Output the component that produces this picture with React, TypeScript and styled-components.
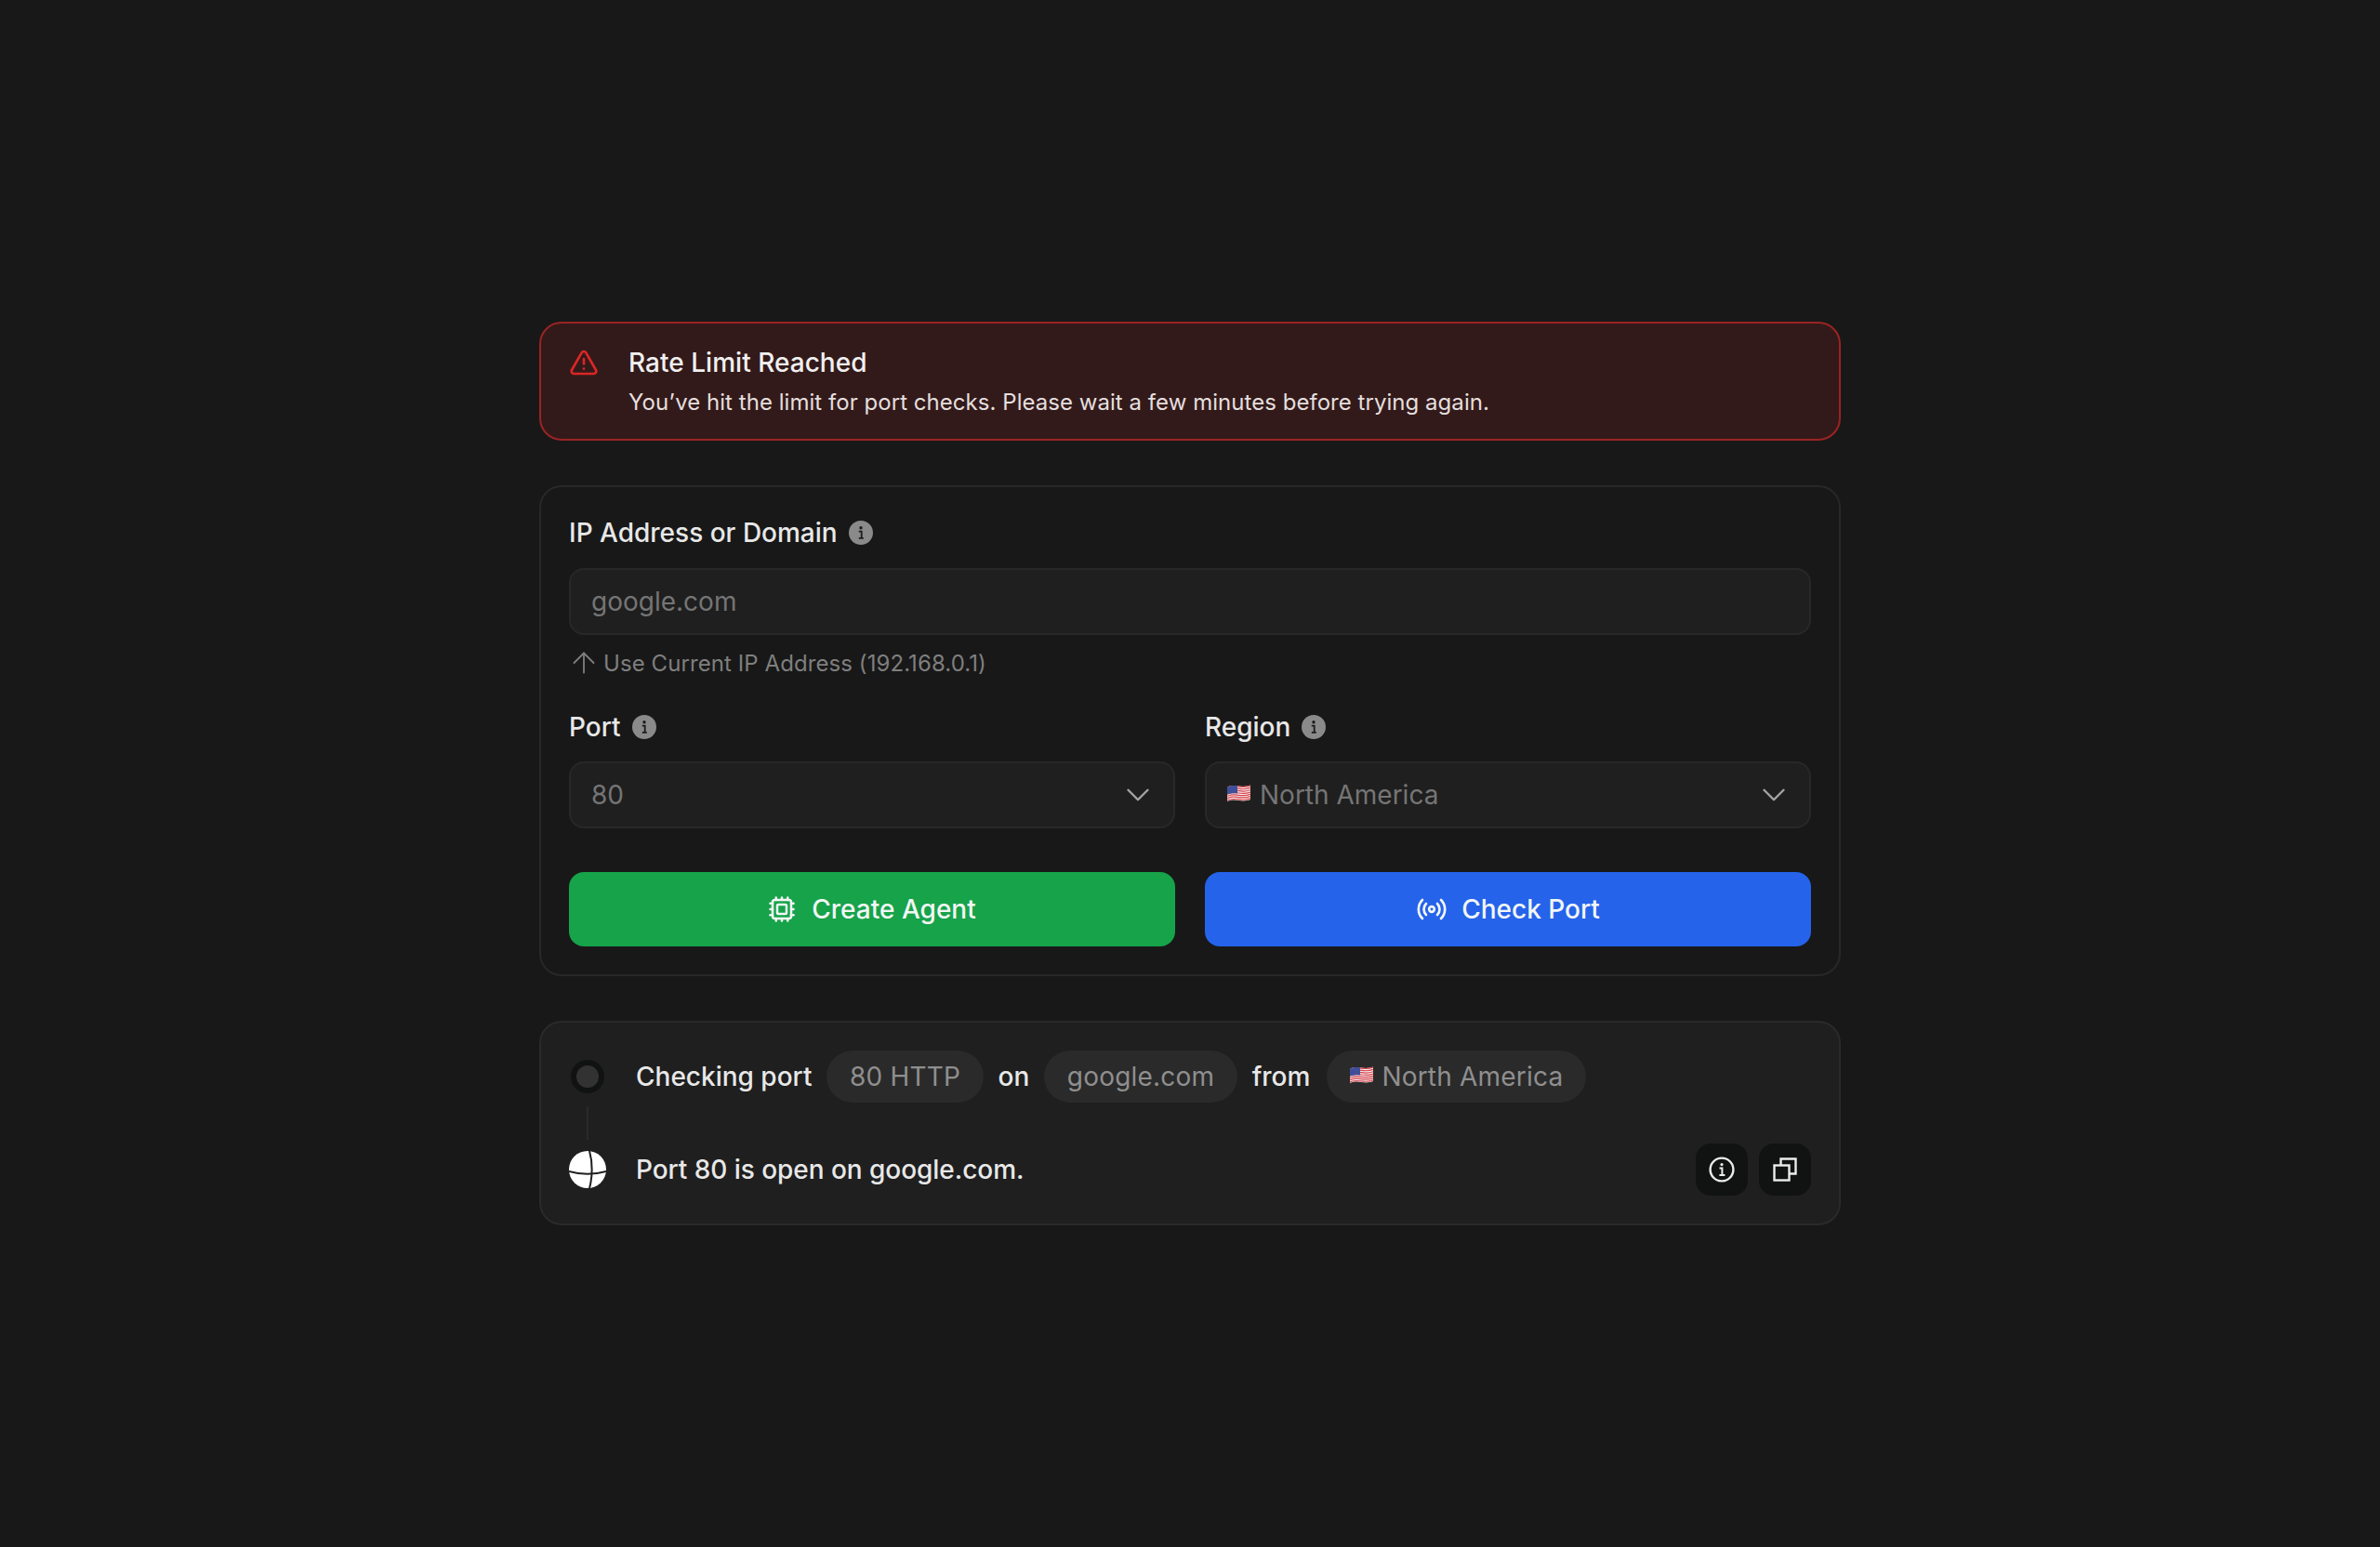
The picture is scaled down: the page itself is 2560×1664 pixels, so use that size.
import React from 'react';
import styled, { createGlobalStyle } from 'styled-components';
import { ArrowUp, ChevronDown, Cpu, Radio, TriangleAlert } from 'lucide-react';

const GlobalStyle = createGlobalStyle`
  html, body {
    margin: 0;
    padding: 0;
    background: #181818;
  }

  * {
    box-sizing: border-box;
  }
`;

const Page = styled.div`
  min-height: 1664px;
  padding-top: 346px;
  display: flex;
  justify-content: center;
  background: #181818;
  font-family: Inter, "Liberation Sans", sans-serif;
  color: #ececec;
`;

const Column = styled.main`
  width: 1400px;
  display: flex;
  flex-direction: column;
  gap: 48px;
`;

const Alert = styled.div`
  height: 128px;
  display: flex;
  gap: 32px;
  padding: 26px 30px;
  background: #331a1a;
  border: 2px solid #9b2323;
  border-radius: 24px;
  color: #dc2626;
`;

const AlertBody = styled.div`
  display: flex;
  flex-direction: column;
  gap: 11px;
`;

const AlertTitle = styled.div`
  font-size: 28px;
  line-height: 32px;
  font-weight: 500;
  letter-spacing: 0.03px;
  color: #f0f0f0;
`;

const AlertText = styled.div`
  font-size: 24px;
  line-height: 32px;
  letter-spacing: 0.04px;
  color: #e4dfdf;
`;

const FormCard = styled.section`
  display: flex;
  flex-direction: column;
  padding: 29px 30px 30px;
  border: 2px solid #272828;
  border-radius: 24px;
`;

const Label = styled.div`
  display: flex;
  align-items: center;
  gap: 12px;
  height: 40px;
  font-size: 28px;
  font-weight: 500;
  color: #e8e8e8;
`;

const TextInput = styled.input`
  width: 100%;
  height: 72px;
  margin-top: 18px;
  padding: 0 22px;
  background: #1f1f1f;
  border: 2px solid #272828;
  border-radius: 16px;
  outline: none;
  font-family: inherit;
  font-size: 28px;
  color: #f0f0f0;

  &::placeholder {
    color: #757575;
    opacity: 1;
  }
`;

const Hint = styled.div`
  display: flex;
  align-items: center;
  gap: 3px;
  height: 32px;
  margin-top: 14px;
  font-size: 24px;
  letter-spacing: 0.08px;
  color: #7f7f7f;

  svg {
    flex: none;
    margin: 0 0 0 -2px;
  }
`;

const FieldGrid = styled.div`
  display: grid;
  grid-template-columns: 1fr 1fr;
  gap: 32px;
`;

const FieldRow = styled(FieldGrid)`
  margin-top: 33px;
`;

const ButtonRow = styled(FieldGrid)`
  margin-top: 47px;
`;

const Select = styled.div`
  height: 72px;
  margin-top: 17px;
  padding: 0 22px;
  display: flex;
  align-items: center;
  gap: 10px;
  background: #1f1f1f;
  border: 2px solid #272828;
  border-radius: 16px;
  font-size: 28px;
  color: #757575;

  svg:last-child {
    margin: 0 -5px 0 auto;
    color: #a3a3a3;
  }
`;

const ActionButton = styled.button<{ $bg: string; $gap: number }>`
  height: 80px;
  display: flex;
  align-items: center;
  justify-content: center;
  gap: ${props => props.$gap}px;
  background: ${props => props.$bg};
  border: none;
  border-radius: 16px;
  font-family: inherit;
  font-size: 28px;
  font-weight: 500;
  color: #f2f6f4;
`;

const ResultCard = styled.section`
  position: relative;
  height: 220px;
  padding: 30px;
  display: flex;
  flex-direction: column;
  gap: 44px;
  background: #1f1f1f;
  border: 2px solid #2a2a2a;
  border-radius: 24px;
`;

const Step = styled.div`
  height: 56px;
  display: flex;
  align-items: center;
  font-size: 28px;
  font-weight: 500;
  letter-spacing: -0.05px;
  color: #e8e8e8;
`;

const StepIcon = styled.div`
  width: 40px;
  margin-right: 32px;
  flex: none;
  display: flex;
  justify-content: center;
`;

const PendingDot = styled.div`
  width: 36px;
  height: 36px;
  background: #323232;
  border: 6px solid #111212;
  border-radius: 50%;
`;

const Connector = styled.div`
  position: absolute;
  left: 49px;
  top: 90px;
  width: 2px;
  height: 36px;
  background: #2a2a2a;
`;

const Word = styled.span<{ $gap?: number }>`
  margin-right: ${props => props.$gap ?? 16}px;
  letter-spacing: 0;
`;

const Chip = styled.span`
  height: 56px;
  margin-right: 16px;
  padding: 0 24.5px;
  display: inline-flex;
  align-items: center;
  gap: 9px;
  background: #2a2a2a;
  border-radius: 28px;
  font-weight: 400;
  letter-spacing: 0.2px;
  color: #8f8f8f;
`;

const FlagChip = styled(Chip)`
  margin-right: 0;
  padding: 0 25px;
`;

const Tools = styled.div`
  margin-left: auto;
  display: flex;
  gap: 12px;
`;

const ToolButton = styled.button`
  width: 56px;
  height: 56px;
  padding: 0;
  display: flex;
  align-items: center;
  justify-content: center;
  background: #111212;
  border: none;
  border-radius: 16px;
  color: #ececec;
`;

const FlagSvg = styled.svg`
  flex: none;
  margin-bottom: 4px;
`;

function InfoDot() {
  return (
    <svg width="26" height="26" viewBox="0 0 26 26">
      <circle cx="13" cy="13" r="13" fill="#8a8a8a" />
      <circle cx="13" cy="7.8" r="1.7" fill="#1c1c1c" />
      <path d="M10.8 11.6h2.9v7M10.8 18.8h5" fill="none" stroke="#1c1c1c" strokeWidth="1.8" />
    </svg>
  );
}

function Flag() {
  const stripes = [0, 1, 2, 3, 4, 5, 6];
  return (
    <FlagSvg width="25" height="19" viewBox="0 0 25 19">
      <path d="M0 2.5C5 .4 8 .8 12.500 1.500s8 .7 12.500-1v15.500c-4.500 1.700-8 1.700-12.500 1S5 16 0 18Z" fill="#f5f2f2" />
      {stripes.map(i => (
        <path
          key={i}
          d={`M0 ${3.1 + i * 2.3}C5 ${1 + i * 2.3} 8 ${1.4 + i * 2.3} 12.500 ${2.1 + i * 2.3}s8 .7 12.500 -1`}
          fill="none"
          stroke="#d8404a"
          strokeWidth="1.200"
        />
      ))}
      <path d="M0 2.500C3 1.300 6 .7 11 1.300v8.200C6 9 3 9.500 0 10.800Z" fill="#3f4f9a" />
    </FlagSvg>
  );
}

function GlobeBall() {
  return (
    <svg width="40" height="40" viewBox="0 0 40 40">
      <circle cx="20" cy="20" r="20" fill="#fff" />
      <path d="M0 22C12 25.500 28 25.500 40 22" fill="none" stroke="#1f1f1f" strokeWidth="2" />
      <path d="M22 0C25.500 12 25.500 28 22 40" fill="none" stroke="#1f1f1f" strokeWidth="2" />
    </svg>
  );
}

function CircleInfo() {
  return (
    <svg width="28" height="28" viewBox="0 0 28 28" fill="none" stroke="currentColor">
      <circle cx="14" cy="14" r="12.400" strokeWidth="2.400" />
      <circle cx="14" cy="8.600" r="1.600" fill="currentColor" stroke="none" />
      <path d="M11.500 12.600h2.900v7M11.400 20h6" strokeWidth="2" />
    </svg>
  );
}

function CopySquares() {
  return (
    <svg width="26" height="26" viewBox="0 0 26 26" fill="none" stroke="currentColor" strokeWidth="2.400">
      <rect x="1.500" y="8.500" width="16" height="16" />
      <path d="M8.500 8V1.500h16v16H18" />
    </svg>
  );
}

export default function App() {
  return (
    <Page>
      <GlobalStyle />
      <Column>
        <Alert>
          <TriangleAlert size={32} strokeWidth={2} />
          <AlertBody>
            <AlertTitle>Rate Limit Reached</AlertTitle>
            <AlertText>You’ve hit the limit for port checks. Please wait a few minutes before trying again.</AlertText>
          </AlertBody>
        </Alert>

        <FormCard>
          <Label>IP Address or Domain <InfoDot /></Label>
          <TextInput placeholder="google.com" />
          <Hint>
            <ArrowUp size={36} strokeWidth={1.2} />
            Use Current IP Address (192.168.0.1)
          </Hint>
          <FieldRow>
            <div>
              <Label>Port <InfoDot /></Label>
              <Select>
                80
                <ChevronDown size={42} strokeWidth={1.4} />
              </Select>
            </div>
            <div>
              <Label>Region <InfoDot /></Label>
              <Select>
                <Flag />
                North America
                <ChevronDown size={42} strokeWidth={1.4} />
              </Select>
            </div>
          </FieldRow>
          <ButtonRow>
            <ActionButton $bg="#16a34a" $gap={17}>
              <Cpu size={30} strokeWidth={2} />
              Create Agent
            </ActionButton>
            <ActionButton $bg="#2563eb" $gap={15}>
              <Radio size={34} strokeWidth={1.9} />
              Check Port
            </ActionButton>
          </ButtonRow>
        </FormCard>

        <ResultCard>
          <Connector />
          <Step>
            <StepIcon><PendingDot /></StepIcon>
            <Word>Checking port</Word>
            <Chip>80 HTTP</Chip>
            <Word>on</Word>
            <Chip>google.com</Chip>
            <Word $gap={18}>from</Word>
            <FlagChip><Flag />North America</FlagChip>
          </Step>
          <Step>
            <StepIcon><GlobeBall /></StepIcon>
            Port 80 is open on google.com.
            <Tools>
              <ToolButton aria-label="details"><CircleInfo /></ToolButton>
              <ToolButton aria-label="copy"><CopySquares /></ToolButton>
            </Tools>
          </Step>
        </ResultCard>
      </Column>
    </Page>
  );
}
